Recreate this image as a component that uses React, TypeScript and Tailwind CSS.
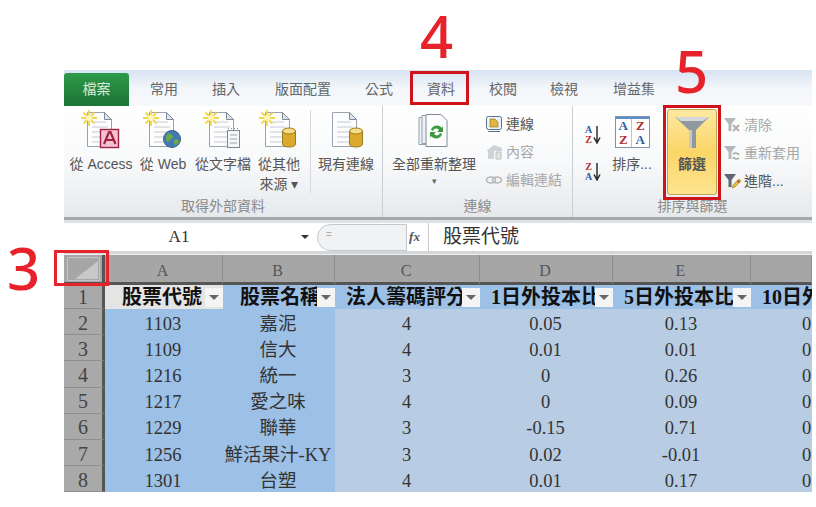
const sans = "font-['Liberation_Sans','Noto_Sans_CJK_TC',sans-serif]";
const serif = "font-['Liberation_Serif','Noto_Sans_CJK_TC',serif]";

function Sparkle() {
  return (
    <svg width="16" height="16" viewBox="0 0 16 16" className="absolute left-0 top-0">
      <path d="M8 0v16M0 8h16M2.5 2.5l11 11M13.5 2.5l-11 11" stroke="#f3d54a" strokeWidth="1.8" />
      <circle cx="8" cy="8" r="3" fill="#fff6b8" />
    </svg>
  );
}

function Doc({ badge, sparkle = true }: { badge?: "access" | "web" | "text" | "db"; sparkle?: boolean }) {
  return (
    <div className="relative h-[40px] w-[40px]">
      <svg width="40" height="40" viewBox="0 0 40 40" className="absolute left-0 top-0">
        <path d="M6.5 2.5h17l7 7v27h-24z" fill="#fdfdfd" stroke="#9aa3ad" />
        <path d="M23.5 2.5v7h7z" fill="#dde6ef" stroke="#7f8b98" />
        <path d="M11 12h14M11 17h16M11 22h16M11 27h16M11 32h16" stroke="#c3ccd5" strokeWidth="1.2" />
        {badge === "access" && (
          <>
            <rect x="19.5" y="19.5" width="18" height="18" fill="#f3c4d0" stroke="#a31f45" strokeWidth="1.4" />
            <path d="M23 34l5-12h1.5l5 12M25 30h8" stroke="#a31f45" strokeWidth="2.2" fill="none" />
          </>
        )}
        {badge === "web" && (
          <>
            <circle cx="29" cy="29" r="8.5" fill="#3f79b6" stroke="#3d5f83" />
            <path d="M24 24c3-2 5 0 6 2s-3 3-4 5-3 0-3-2 0-4 1-5zM31 30c2-1 5-1 5 1s-3 5-4 4-2-4-1-5z" fill="#6aa84f" />
          </>
        )}
        {badge === "text" && (
          <>
            <rect x="24.5" y="20.5" width="12" height="17" fill="#f4f6f8" stroke="#7c8894" />
            <path d="M27 25h7M27 29h7M27 33h7" stroke="#9aa5b0" />
            <path d="M25 18.5h1M28 18.5h1M31 18.5h1M34 18.5h1" stroke="#7c8894" />
          </>
        )}
        {badge === "db" && (
          <>
            <path d="M23.5 21v13c0 4 13 4 13 0V21z" fill="#dba92c" stroke="#9b7a20" />
            <ellipse cx="30" cy="21" rx="6.5" ry="3" fill="#f5dd87" stroke="#9b7a20" />
          </>
        )}
      </svg>
      {sparkle && <Sparkle />}
    </div>
  );
}

function BigItem({ w, label, badge, sparkle }: { w: string; label: string[]; badge: "access" | "web" | "text" | "db"; sparkle?: boolean }) {
  return (
    <div className={`${w} flex flex-col items-center pt-[4px]`}>
      <Doc badge={badge} sparkle={sparkle} />
      <div className="mt-[4px] text-center text-[14px] leading-[20px] text-[#555] whitespace-nowrap">
        {label.map((l) => (
          <div key={l}>{l}</div>
        ))}
      </div>
    </div>
  );
}

function SmallRow({ icon, text, muted }: { icon: React.ReactNode; text: string; muted?: boolean }) {
  return (
    <div className={`flex h-[28px] items-center gap-[3px] text-[14px] whitespace-nowrap ${muted ? "text-[#a8a8a8]" : "text-[#555]"}`}>
      <div className="flex w-[18px] justify-center">{icon}</div>
      {text}
    </div>
  );
}

function Funnel() {
  return (
    <svg width="36" height="32" viewBox="0 0 36 32">
      <path d="M1 1h34L22 14v18h-7V14z" fill="#8f979f" />
      <path d="M1 1h34l-6 4H7z" fill="#d4d8dc" />
      <path d="M15 14h3v18h-3z" fill="#c4c9cd" />
    </svg>
  );
}

function SmallFunnel({ kind }: { kind: "clear" | "reapply" | "advanced" }) {
  const color = kind === "advanced" ? "#5e676f" : "#b4b9be";
  return (
    <svg width="18" height="18" viewBox="0 0 18 18">
      <path d="M1 2h12L8.5 8v7h-3V8z" fill={color} />
      {kind === "clear" && <path d="M10 9l6 6M16 9l-6 6" stroke="#b9a8a8" strokeWidth="1.8" />}
      {kind === "reapply" && <path d="M10 10a4 4 0 0 1 6 1M16 14a4 4 0 0 1-6-1" stroke="#a8b4a8" strokeWidth="1.8" fill="none" />}
      {kind === "advanced" && (
        <>
          <path d="M9 16l1-3 6-6 2 2-6 6z" fill="#e8b93a" stroke="#9b7a20" strokeWidth=".6" />
          <path d="M14.5 8.5l2 2" stroke="#c0392b" strokeWidth="1.4" />
        </>
      )}
    </svg>
  );
}

function SortIcon({ a, b }: { a: string; b: string }) {
  return (
    <div className="flex items-center gap-[1px]">
      <div className={`${serif} flex flex-col text-center text-[10px] font-bold leading-[10px]`}>
        <span className={a === "A" ? "text-[#2b5f9e]" : "text-[#b03030]"}>{a}</span>
        <span className={b === "A" ? "text-[#2b5f9e]" : "text-[#b03030]"}>{b}</span>
      </div>
      <svg width="8" height="18" viewBox="0 0 8 18">
        <path d="M4 0v15M1 11.5L4 17l3-5.5" stroke="#222" strokeWidth="1.4" fill="none" />
      </svg>
    </div>
  );
}

function Ribbon() {
  return (
    <div className="flex h-[114px] border-b-[3px] border-[#a5a8ab] bg-gradient-to-b from-white via-[#f8f9fa] to-[#e6e9ec]">
      <div className="flex w-[319px] flex-col border-r border-[#c9ced3]">
        <div className="flex h-[91px] pl-[6px]">
          <BigItem w="w-[62px]" label={["從 Access"]} badge="access" />
          <BigItem w="w-[62px]" label={["從 Web"]} badge="web" />
          <BigItem w="w-[58px]" label={["從文字檔"]} badge="text" />
          <BigItem w="w-[54px]" label={["從其他", "來源 ▾"]} badge="db" />
          <div className="my-[4px] ml-[4px] w-px bg-[#d5d9dd]" />
          <BigItem w="w-[70px]" label={["現有連線"]} badge="db" sparkle={false} />
        </div>
        <div className="text-center text-[14px] leading-[18px] text-[#8a8a8a]">取得外部資料</div>
      </div>
      <div className="flex w-[190px] flex-col border-r border-[#c9ced3]">
        <div className="flex h-[91px]">
          <div className="flex w-[102px] flex-col items-center pt-[7px]">
            <svg width="36" height="36" viewBox="0 0 36 36">
              <path d="M3 4.5h18v27H3z" fill="#eef2f6" stroke="#95a0ab" />
              <path d="M6 2.5h18v28H6z" fill="#eef2f6" stroke="#95a0ab" />
              <path d="M10 1.5h15l6 6v26H10z" fill="#fdfdfd" stroke="#7f8b98" />
              <path d="M15 17c1-5 8-6 11-2l1-2v6h-6l2-2c-2-2-5-2-6 1zM26 21c-1 5-8 6-11 2l-1 2v-6h6l-2 2c2 2 5 2 6-1z" fill="#3c9a3c" />
            </svg>
            <div className="mt-[5px] whitespace-nowrap text-[14px] leading-[20px] text-[#555]">全部重新整理</div>
            <div className="text-[9px] leading-[15px] text-[#666]">▾</div>
          </div>
          <div className="pt-[4px]">
            <SmallRow
              text="連線"
              icon={
                <svg width="18" height="18" viewBox="0 0 18 18">
                  <rect x="1.5" y="1.5" width="15" height="13" rx="2" fill="#eef3f8" stroke="#56708c" />
                  <path d="M5 4h5l3 3v5H5z" fill="#e2b53e" stroke="#8a6d1f" strokeWidth=".6" />
                  <path d="M3 16.5h12" stroke="#56708c" />
                </svg>
              }
            />
            <SmallRow
              muted
              text="內容"
              icon={
                <svg width="18" height="18" viewBox="0 0 18 18">
                  <path d="M1 8l8-6 8 3v3H9v8H3V8z" fill="#cfd3d7" />
                  <path d="M11 9h5v7h-5z" fill="#e2e4e6" stroke="#bcc0c4" />
                </svg>
              }
            />
            <SmallRow
              muted
              text="編輯連結"
              icon={
                <svg width="18" height="18" viewBox="0 0 18 18">
                  <ellipse cx="6" cy="9" rx="4.5" ry="3" fill="none" stroke="#b4b8bc" strokeWidth="1.6" />
                  <ellipse cx="12" cy="9" rx="4.5" ry="3" fill="none" stroke="#b4b8bc" strokeWidth="1.6" />
                </svg>
              }
            />
          </div>
        </div>
        <div className="text-center text-[14px] leading-[18px] text-[#8a8a8a]">連線</div>
      </div>
      <div className="flex flex-1 flex-col">
        <div className="flex h-[91px]">
          <div className="flex w-[40px] flex-col items-center gap-[17px] pt-[19px]">
            <SortIcon a="A" b="Z" />
            <SortIcon a="Z" b="A" />
          </div>
          <div className="flex w-[38px] flex-col items-center pt-[10px]">
            <div className="h-[32px] w-[35px] shrink-0 border border-[#7f93aa] bg-white">
              <div className="h-[2px] bg-[#5b8fca]" />
              <div className={`${serif} grid grid-cols-2 divide-x divide-[#b8c4d0] text-center text-[13px] font-bold leading-[14px]`}>
                <div>
                  <div className="text-[#2b5f9e]">A</div>
                  <div className="text-[#b03030]">Z</div>
                </div>
                <div>
                  <div className="text-[#b03030]">Z</div>
                  <div className="text-[#2b5f9e]">A</div>
                </div>
              </div>
            </div>
            <div className="mt-[6px] whitespace-nowrap text-[14px] leading-[20px] text-[#555]">排序...</div>
          </div>
          <div className="ml-[16px] mt-[3px] flex h-[86px] w-[50px] flex-col items-center rounded-[3px] border border-[#c2a34c] bg-gradient-to-b from-[#fde9a0] via-[#fbd567] to-[#fde58f] pt-[6px]">
            <Funnel />
            <div className="mt-[6px] text-[14px] font-semibold leading-[20px] text-[#555]">篩選</div>
          </div>
          <div className="pl-[6px] pt-[5px]">
            <SmallRow muted text="清除" icon={<SmallFunnel kind="clear" />} />
            <SmallRow muted text="重新套用" icon={<SmallFunnel kind="reapply" />} />
            <SmallRow text="進階..." icon={<SmallFunnel kind="advanced" />} />
          </div>
        </div>
        <div className="text-center text-[14px] leading-[18px] text-[#8a8a8a]">排序與篩選</div>
      </div>
    </div>
  );
}

const tabs = [
  { t: "常用", w: "w-[62px]" },
  { t: "插入", w: "w-[62px]" },
  { t: "版面配置", w: "w-[92px]" },
  { t: "公式", w: "w-[60px]" },
  { t: "資料", w: "w-[64px]" },
  { t: "校閱", w: "w-[60px]" },
  { t: "檢視", w: "w-[62px]" },
  { t: "增益集", w: "w-[78px]" },
];

const colW = "grid-cols-[41px_118px_112px_145px_133px_138px_61px]";

const heads = ["股票代號", "股票名稱", "法人籌碼評分", "1日外投本比", "5日外投本比", "10日外投本比"];

const rows = [
  ["1103", "嘉泥", "4", "0.05", "0.13", "0"],
  ["1109", "信大", "4", "0.01", "0.01", "0"],
  ["1216", "統一", "3", "0", "0.26", "0"],
  ["1217", "愛之味", "4", "0", "0.09", "0"],
  ["1229", "聯華", "3", "-0.15", "0.71", "0"],
  ["1256", "鮮活果汁-KY", "3", "0.02", "-0.01", "0"],
  ["1301", "台塑", "4", "0.01", "0.17", "0"],
];

function FilterBtn() {
  return (
    <div className="flex h-[19px] w-[18px] shrink-0 items-center justify-center bg-[#f4f4f4]">
      <div className="h-0 w-0 border-x-[5px] border-t-[5px] border-x-transparent border-t-[#666]" />
    </div>
  );
}

function Sheet() {
  return (
    <div className={`${serif} grid overflow-hidden ${colW} text-[#333]`}>
      <div className="flex h-[30px] items-center justify-center border-b-[3px] border-r-[3px] border-b-[#555] border-r-[#555] bg-[#a6a6a6]">
        <svg width="33" height="24" viewBox="0 0 33 24">
          <path d="M31 4v18H8z" fill="#c8c8c8" />
          <path d="M.5.5h32v23H.5z" fill="none" stroke="#c4c4c4" />
        </svg>
      </div>
      {["A", "B", "C", "D", "E", "F"].map((c) => (
        <div key={c} className="flex h-[30px] items-center justify-center border-b-[3px] border-r border-b-[#555] border-r-[#8d8d8d] bg-[#a6a6a6] pr-[2px] pt-[4px] text-[16px] text-[#555]">
          {c === "F" ? "" : c}
        </div>
      ))}
      <div className="flex h-[24px] items-center justify-center border-b border-r-[3px] border-b-[#8f8f8f] border-r-[#555] bg-[#a9a9a9] text-[20px] text-[#444]">1</div>
      {heads.map((h, i) => (
        <div key={h} className={`flex h-[24px] min-w-0 items-center ${i === 0 ? "bg-[#e4e4e4]" : "bg-[#9cc0e6]"}`}>
          <div className={`min-w-0 flex-1 overflow-hidden whitespace-nowrap text-[20px] font-bold leading-[24px] text-[#111] ${i < 2 ? "pl-[17px]" : "pl-[11px]"}`}>{h}</div>
          {i < 5 && <FilterBtn />}
        </div>
      ))}
      {rows.map((r, ri) => (
        <div key={r[0]} className="contents">
          <div className="flex h-[26.2px] items-center justify-center border-b border-r-[3px] border-b-[#8f8f8f] border-r-[#555] bg-[#a9a9a9] pt-[2px] text-[20px] text-[#444]">{ri + 2}</div>
          {r.map((v, i) => (
            <div key={i} className={`flex h-[26.2px] items-center overflow-hidden whitespace-nowrap pt-[3px] text-[18.5px] leading-[22px] ${i < 2 ? "bg-[#9cc0e6]" : "bg-[#b8cde4]"} ${i === 5 ? "justify-start pl-[51px]" : "justify-center pr-[2px]"}`}>
              {v}
            </div>
          ))}
        </div>
      ))}
    </div>
  );
}

const digit = "absolute font-['Noto_Sans',sans-serif] text-[58px] font-medium leading-[60px] text-[#e8222a]";

export default function App() {
  return (
    <div className={`${sans} relative h-[507px] w-[816px] overflow-hidden bg-white pl-[64px] pt-[70px]`}>
      <div className="w-[748px]">
        <div className="flex h-[36px] bg-gradient-to-b from-[#d6e3f2] via-[#f3f6fa] to-[#f8f9fb]">
          <div className="mt-[1px] flex h-[33px] w-[65px] items-center justify-center self-end rounded-t-[3px] bg-gradient-to-b from-[#2f9a4a] to-[#1c7434] text-[14px] text-[#d8ead9]">檔案</div>
          <div className="flex items-center pl-[4px] text-[14px] text-[#666]">
            {tabs.map((t) => (
              <div key={t.t} className={`${t.w} pt-[3px] text-center`}>{t.t}</div>
            ))}
          </div>
        </div>
        <Ribbon />
        <div className="h-[3px] bg-[#dfe3e7]" />
        <div className="flex h-[31px] items-center border-b-[3px] border-[#d4d7da] bg-white">
          <div className={`${serif} w-[222px] pl-[8px] text-center text-[17px] text-[#333]`}>A1</div>
          <div className="ml-[15px] h-0 w-0 border-x-[4px] border-t-[4px] border-x-transparent border-t-[#333]" />
          <div className="ml-[8px] h-[27px] w-[90px] rounded-l-full border border-[#c4c8cc] bg-[#f0f2f4] pl-[8px] text-[10px] leading-[20px] text-[#aaa]">=</div>
          <div className={`${serif} w-[15px] text-center text-[13px] font-bold italic text-[#555]`}>fx</div>
          <div className="ml-[6px] h-full w-px bg-[#ccc]" />
          <div className={`${serif} pl-[14px] text-[19px] text-[#333]`}>股票代號</div>
        </div>
        <div className="h-px bg-[#eee]" />
        <Sheet />
      </div>

      <div className={`${digit} left-[420px] top-[6px]`}>4</div>
      <div className={`${digit} left-[675px] top-[41px]`}>5</div>
      <div className={`${digit} left-[7px] top-[238px]`}>3</div>

      <div className="absolute left-[410px] top-[71px] h-[34px] w-[59px] border-[3px] border-[#d0121b]" />
      <div className="absolute left-[663px] top-[105px] h-[95px] w-[58px] border-[3px] border-[#d0121b]" />
      <div className="absolute left-[54px] top-[250px] h-[36px] w-[55px] border-[3px] border-[#e8222a]" />
    </div>
  );
}
